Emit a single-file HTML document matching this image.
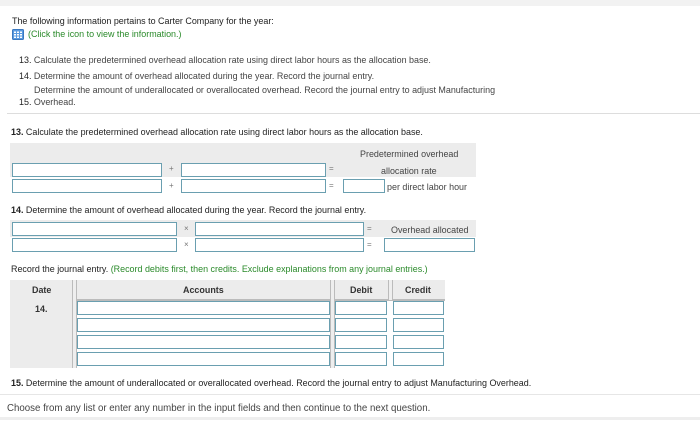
<!DOCTYPE html>
<html><head><style>
body{margin:0;width:700px;height:446px;background:#fff;position:relative;overflow:hidden;font-family:"Liberation Sans",Arial,sans-serif;font-size:8.95px;color:#222}
.a{position:absolute;white-space:nowrap}
.in{position:absolute;background:#fff;border:1px solid #6a9fb0;box-sizing:border-box}
.g{position:absolute;background:#ececec}
.op{position:absolute;color:#777;font-size:8px}
.gr{color:#2a8a2a}
b{font-weight:bold}
</style></head><body>
<div style="position:absolute;left:0;top:0;width:700px;height:6px;background:#f2f2f2"></div>
<div class="a" style="left:12px;top:16px">The following information pertains to Carter Company for the year:</div>
<svg style="position:absolute;left:12px;top:29px" width="12" height="11" viewBox="0 0 12 11"><rect x="0.5" y="0.5" width="11" height="10" rx="1" fill="#5b9be0" stroke="#3a78c0"/><g fill="#fff"><rect x="2" y="2.5" width="2" height="1.5"/><rect x="5" y="2.5" width="2" height="1.5"/><rect x="8" y="2.5" width="2" height="1.5"/><rect x="2" y="5" width="2" height="1.5"/><rect x="5" y="5" width="2" height="1.5"/><rect x="8" y="5" width="2" height="1.5"/><rect x="2" y="7.5" width="2" height="1.5"/><rect x="5" y="7.5" width="2" height="1.5"/><rect x="8" y="7.5" width="2" height="1.5"/></g></svg>
<div class="a gr" style="left:28px;top:29px">(Click the icon to view the information.)</div>
<div class="a" style="left:19px;top:55px;color:#444"><span style="color:#222">13.</span> Calculate the predetermined overhead allocation rate using direct labor hours as the allocation base.</div>
<div class="a" style="left:19px;top:71px;color:#444"><span style="color:#222">14.</span> Determine the amount of overhead allocated during the year. Record the journal entry.</div>
<div class="a" style="left:34px;top:85px;color:#444">Determine the amount of underallocated or overallocated overhead. Record the journal entry to adjust Manufacturing</div>
<div class="a" style="left:19px;top:97px;color:#444"><span style="color:#222">15.</span> Overhead.</div>
<div style="position:absolute;left:7px;top:113px;width:693px;height:1px;background:#ddd"></div>
<div class="a" style="left:11px;top:127px"><b>13.</b> Calculate the predetermined overhead allocation rate using direct labor hours as the allocation base.</div>

<div class="g" style="left:10px;top:143px;width:466px;height:34px"></div>
<div class="a" style="left:360px;top:149px;color:#444">Predetermined overhead</div>
<div class="in" style="left:12px;top:163px;width:150px;height:14px"></div>
<div class="op" style="left:169px;top:164px">+</div>
<div class="in" style="left:181px;top:163px;width:145px;height:14px"></div>
<div class="op" style="left:329px;top:164px">=</div>
<div class="a" style="left:381px;top:166px;color:#444">allocation rate</div>
<div class="in" style="left:12px;top:179px;width:150px;height:14px"></div>
<div class="op" style="left:169px;top:181px">+</div>
<div class="in" style="left:181px;top:179px;width:145px;height:14px"></div>
<div class="op" style="left:329px;top:181px">=</div>
<div class="in" style="left:343px;top:179px;width:42px;height:14px"></div>
<div class="a" style="left:387px;top:182px;color:#444">per direct labor hour</div>

<div class="a" style="left:11px;top:205px"><b>14.</b> Determine the amount of overhead allocated during the year. Record the journal entry.</div>
<div class="g" style="left:10px;top:220px;width:466px;height:17px"></div>
<div class="in" style="left:12px;top:222px;width:165px;height:14px"></div>
<div class="op" style="left:184px;top:224px">×</div>
<div class="in" style="left:195px;top:222px;width:169px;height:14px"></div>
<div class="op" style="left:367px;top:224px">=</div>
<div class="a" style="left:391px;top:225px;color:#444">Overhead allocated</div>
<div class="in" style="left:12px;top:238px;width:165px;height:14px"></div>
<div class="op" style="left:184px;top:240px">×</div>
<div class="in" style="left:195px;top:238px;width:169px;height:14px"></div>
<div class="op" style="left:367px;top:240px">=</div>
<div class="in" style="left:384px;top:238px;width:91px;height:14px"></div>

<div class="a" style="left:11px;top:264px">Record the journal entry. <span class="gr">(Record debits first, then credits. Exclude explanations from any journal entries.)</span></div>
<div class="g" style="left:10px;top:280px;width:435px;height:19px;border-bottom:2px solid #bbb"></div>
<div class="g" style="left:10px;top:299px;width:62px;height:69px"></div>
<div style="position:absolute;left:72px;top:280px;width:3px;height:88px;border-left:1px solid #bbb;border-right:1px solid #bbb;background:#eee"></div>
<div style="position:absolute;left:330px;top:280px;width:3px;height:88px;border-left:1px solid #bbb;border-right:1px solid #bbb;background:#eee"></div>
<div style="position:absolute;left:388px;top:280px;width:3px;height:20px;border-left:1px solid #bbb;border-right:1px solid #bbb;background:#eee"></div>
<div class="a" style="left:32px;top:285px;font-weight:bold;color:#333">Date</div>
<div class="a" style="left:183px;top:285px;font-weight:bold;color:#333">Accounts</div>
<div class="a" style="left:350px;top:285px;font-weight:bold;color:#333">Debit</div>
<div class="a" style="left:405px;top:285px;font-weight:bold;color:#333">Credit</div>
<div class="a" style="left:35px;top:304px;font-weight:bold;color:#333">14.</div>
<div class="in" style="left:77px;top:301px;width:253px;height:14px"></div>
<div class="in" style="left:335px;top:301px;width:52px;height:14px"></div>
<div class="in" style="left:393px;top:301px;width:51px;height:14px"></div>
<div class="in" style="left:77px;top:318px;width:253px;height:14px"></div>
<div class="in" style="left:335px;top:318px;width:52px;height:14px"></div>
<div class="in" style="left:393px;top:318px;width:51px;height:14px"></div>
<div class="in" style="left:77px;top:335px;width:253px;height:14px"></div>
<div class="in" style="left:335px;top:335px;width:52px;height:14px"></div>
<div class="in" style="left:393px;top:335px;width:51px;height:14px"></div>
<div class="in" style="left:77px;top:352px;width:253px;height:14px"></div>
<div class="in" style="left:335px;top:352px;width:52px;height:14px"></div>
<div class="in" style="left:393px;top:352px;width:51px;height:14px"></div>

<div class="a" style="left:11px;top:378px"><b>15.</b> Determine the amount of underallocated or overallocated overhead. Record the journal entry to adjust Manufacturing Overhead.</div>
<div style="position:absolute;left:0;top:394px;width:700px;height:1px;background:#e6e6e6"></div>
<div class="a" style="left:7px;top:403px;color:#444;font-size:9.7px">Choose from any list or enter any number in the input fields and then continue to the next question.</div>
<div style="position:absolute;left:0;top:417px;width:700px;height:3px;background:#eee"></div>
</body></html>
